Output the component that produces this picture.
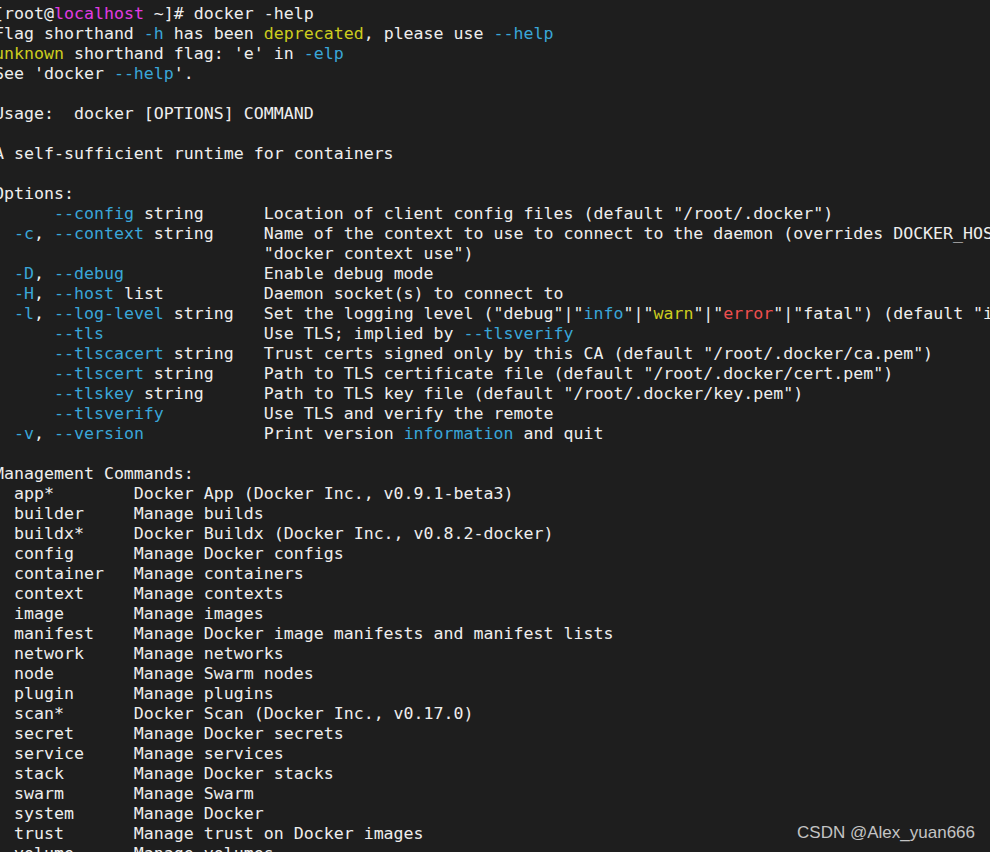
import React from 'react';

type Seg = [string, string?];
type Line = Seg[];

const C = 'text-[#3aa6d8]';
const Y = 'text-[#cdcd1f]';
const M = 'text-[#e23be2]';
const R = 'text-[#ef4f4f]';

const pad = (s: string, n: number) => s + ' '.repeat(Math.max(0, n - s.length));

const header: Line[] = [
  [['[root@'], ['localhost', M], [' ~]# docker -help']],
  [['Flag shorthand '], ['-h', C], [' has been '], ['deprecated', Y], [', please use '], ['--help', C]],
  [['unknown', Y], [" shorthand flag: 'e' in "], ['-elp', C]],
  [["See 'docker "], ['--help', C], ["'."]],
  [],
  [['Usage:  docker [OPTIONS] COMMAND']],
  [],
  [['A self-sufficient runtime for containers']],
  [],
  [['Options:']],
];

const options: Line[] = [
  [['      '], ['--config', C], [' string      Location of client config files (default "/root/.docker")']],
  [['  '], ['-c', C], [', '], ['--context', C], [' string     Name of the context to use to connect to the daemon (overrides DOCKER_HOST env var and default context set with']],
  [[' '.repeat(27) + '"docker context use")']],
  [['  '], ['-D', C], [', '], ['--debug', C], ['              Enable debug mode']],
  [['  '], ['-H', C], [', '], ['--host', C], [' list          Daemon socket(s) to connect to']],
  [
    ['  '], ['-l', C], [', '], ['--log-level', C], [' string   Set the logging level ("debug"|"'],
    ['info', C], ['"|"'], ['warn', Y], ['"|"'], ['error', R], ['"|"fatal") (default "info")'],
  ],
  [['      '], ['--tls', C], ['                Use TLS; implied by '], ['--tlsverify', C]],
  [['      '], ['--tlscacert', C], [' string   Trust certs signed only by this CA (default "/root/.docker/ca.pem")']],
  [['      '], ['--tlscert', C], [' string     Path to TLS certificate file (default "/root/.docker/cert.pem")']],
  [['      '], ['--tlskey', C], [' string      Path to TLS key file (default "/root/.docker/key.pem")']],
  [['      '], ['--tlsverify', C], ['          Use TLS and verify the remote']],
  [['  '], ['-v', C], [', '], ['--version', C], ['            Print version '], ['information', C], [' and quit']],
  [],
  [['Management Commands:']],
];

const commands: [string, string][] = [
  ['app*', 'Docker App (Docker Inc., v0.9.1-beta3)'],
  ['builder', 'Manage builds'],
  ['buildx*', 'Docker Buildx (Docker Inc., v0.8.2-docker)'],
  ['config', 'Manage Docker configs'],
  ['container', 'Manage containers'],
  ['context', 'Manage contexts'],
  ['image', 'Manage images'],
  ['manifest', 'Manage Docker image manifests and manifest lists'],
  ['network', 'Manage networks'],
  ['node', 'Manage Swarm nodes'],
  ['plugin', 'Manage plugins'],
  ['scan*', 'Docker Scan (Docker Inc., v0.17.0)'],
  ['secret', 'Manage Docker secrets'],
  ['service', 'Manage services'],
  ['stack', 'Manage Docker stacks'],
  ['swarm', 'Manage Swarm'],
  ['system', 'Manage Docker'],
  ['trust', 'Manage trust on Docker images'],
  ['volume', 'Manage volumes'],
];

const lines: Line[] = [
  ...header,
  ...options,
  ...commands.map(([name, desc]): Line => [['  ' + pad(name, 12) + desc]]),
];

export default function App() {
  return (
    <div className="relative w-[990px] h-[852px] overflow-hidden bg-[#1e1e1e]">
      <div
        className="ml-[-6px] pt-[4px] text-[16.6px] leading-[20px] text-[#eeeeee] whitespace-pre"
        style={{ fontFamily: '"DejaVu Sans Mono", monospace' }}
      >
        {lines.map((line, i) => (
          <div key={i} className="h-[20px]">
            {line.length === 0
              ? ' '
              : line.map(([text, cls], j) => (
                  <span key={j} className={cls}>
                    {text}
                  </span>
                ))}
          </div>
        ))}
      </div>
      <div
        className="absolute right-[15px] top-[820px] text-[17px] text-[#c4c4c4]"
        style={{ fontFamily: '"Liberation Sans", Arial, sans-serif' }}
      >
        CSDN @Alex_yuan666
      </div>
    </div>
  );
}
